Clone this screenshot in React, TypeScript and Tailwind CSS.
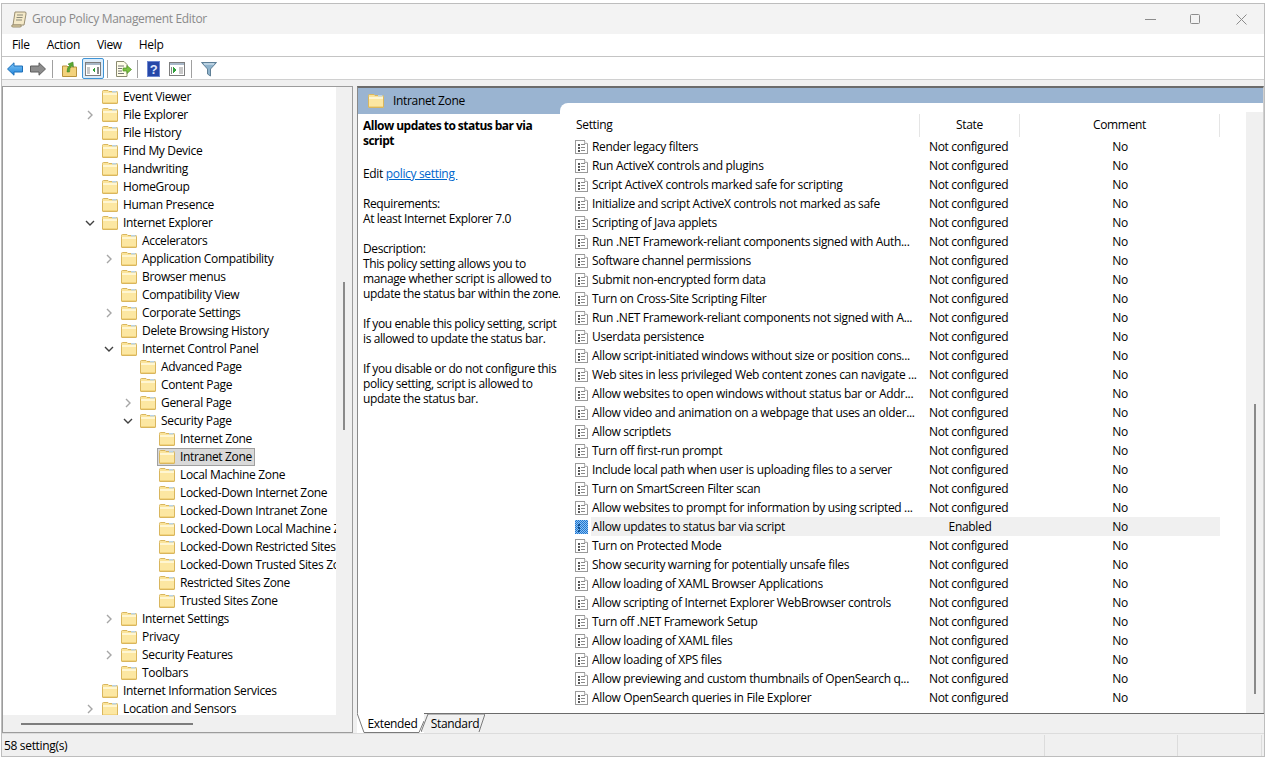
import React from "react";

const F = "font-['Open_Sans',sans-serif] text-[12px] tracking-[-0.33px]";

function Folder() {
  return (
    <svg width="16" height="14" viewBox="0 0 16 14" className="shrink-0">
      <path d="M0.5 2.5 V1.5 Q0.5 0.5 1.5 0.5 H6 L7 1.5 H15 Q15.5 1.5 15.5 2.5 V13 Q15.5 13.5 15 13.5 H1 Q0.5 13.5 0.5 13 Z" fill="#fbe49a" stroke="#d9b65e" />
      <path d="M1 3 H15 V5 H1 Z" fill="#fff6d2" />
      <path d="M1 5 H15 V13 H1 Z" fill="#fce7a2" />
      <path d="M10 1 H14.5 V2.5 H10 Z" fill="#b9d3e8" />
      <path d="M1 12 H15 V13 H1 Z" fill="#f3d57f" />
    </svg>
  );
}

const cells = Array.from({ length: 13 * 14 }, (_, i) => ({ x: i % 13, y: Math.floor(i / 13) }));

function PolicyIcon({ active = false }: { active?: boolean }) {
  if (active) {
    return (
      <svg width="14" height="14" viewBox="0 0 14 14" className="shrink-0" shapeRendering="crispEdges">
        {cells.map((c) => (
          <rect key={`${c.x}-${c.y}`} x={c.x} y={c.y} width="1" height="1" fill={(c.x + c.y) % 2 ? "#1f74cf" : "#8cc2f2"} />
        ))}
        <rect x="3" y="4" width="2" height="2" fill="#12508e" />
        <rect x="3" y="7" width="2" height="2" fill="#12508e" />
        <rect x="3" y="10" width="2" height="2" fill="#12508e" />
      </svg>
    );
  }
  return (
    <svg width="14" height="14" viewBox="0 0 14 14" className="shrink-0" shapeRendering="crispEdges">
      <path d="M0.5 0.5 H9.5 L12.5 3.5 V13.5 H0.5 Z" fill="#fff" stroke="#9a9a9a" />
      <path d="M9.5 0.5 V3.5 H12.5" fill="#e8e8e8" stroke="#b5b5b5" />
      <rect x="3" y="4" width="2" height="2" fill="#555" />
      <rect x="3" y="7" width="2" height="2" fill="#555" />
      <rect x="3" y="10" width="2" height="2" fill="#555" />
      <rect x="6" y="4" width="4" height="1" fill="#8a8a8a" />
      <rect x="6" y="7" width="4" height="1" fill="#8a8a8a" />
      <rect x="6" y="10" width="4" height="1" fill="#8a8a8a" />
    </svg>
  );
}

function Chevron({ open }: { open?: boolean }) {
  return (
    <svg width="10" height="10" viewBox="0 0 10 10" className="-ml-[2px] shrink-0">
      {open ? (
        <path d="M1 3 L5 7 L9 3" fill="none" stroke="#404040" strokeWidth="1.4" />
      ) : (
        <path d="M3 1 L7 5 L3 9" fill="none" stroke="#a6a6a6" strokeWidth="1.4" />
      )}
    </svg>
  );
}

type Node = [number, string, ("c" | "o")?, boolean?];
const tree: Node[] = [
  [0, "Event Viewer"],
  [0, "File Explorer", "c"],
  [0, "File History"],
  [0, "Find My Device"],
  [0, "Handwriting"],
  [0, "HomeGroup"],
  [0, "Human Presence"],
  [0, "Internet Explorer", "o"],
  [1, "Accelerators"],
  [1, "Application Compatibility", "c"],
  [1, "Browser menus"],
  [1, "Compatibility View"],
  [1, "Corporate Settings", "c"],
  [1, "Delete Browsing History"],
  [1, "Internet Control Panel", "o"],
  [2, "Advanced Page"],
  [2, "Content Page"],
  [2, "General Page", "c"],
  [2, "Security Page", "o"],
  [3, "Internet Zone"],
  [3, "Intranet Zone", undefined, true],
  [3, "Local Machine Zone"],
  [3, "Locked-Down Internet Zone"],
  [3, "Locked-Down Intranet Zone"],
  [3, "Locked-Down Local Machine Zone"],
  [3, "Locked-Down Restricted Sites Zone"],
  [3, "Locked-Down Trusted Sites Zone"],
  [3, "Restricted Sites Zone"],
  [3, "Trusted Sites Zone"],
  [1, "Internet Settings", "c"],
  [1, "Privacy"],
  [1, "Security Features", "c"],
  [1, "Toolbars"],
  [0, "Internet Information Services"],
  [0, "Location and Sensors", "c"],
];

const settings = [
  "Render legacy filters",
  "Run ActiveX controls and plugins",
  "Script ActiveX controls marked safe for scripting",
  "Initialize and script ActiveX controls not marked as safe",
  "Scripting of Java applets",
  "Run .NET Framework-reliant components signed with Auth...",
  "Software channel permissions",
  "Submit non-encrypted form data",
  "Turn on Cross-Site Scripting Filter",
  "Run .NET Framework-reliant components not signed with A...",
  "Userdata persistence",
  "Allow script-initiated windows without size or position cons...",
  "Web sites in less privileged Web content zones can navigate ...",
  "Allow websites to open windows without status bar or Addr...",
  "Allow video and animation on a webpage that uses an older...",
  "Allow scriptlets",
  "Turn off first-run prompt",
  "Include local path when user is uploading files to a server",
  "Turn on SmartScreen Filter scan",
  "Allow websites to prompt for information by using scripted ...",
  "Allow updates to status bar via script",
  "Turn on Protected Mode",
  "Show security warning for potentially unsafe files",
  "Allow loading of XAML Browser Applications",
  "Allow scripting of Internet Explorer WebBrowser controls",
  "Turn off .NET Framework Setup",
  "Allow loading of XAML files",
  "Allow loading of XPS files",
  "Allow previewing and custom thumbnails of OpenSearch q...",
  "Allow OpenSearch queries in File Explorer",
];

const indentClass = ["pl-[84px]", "pl-[103px]", "pl-[122px]", "pl-[141px]"];

function TreeRow({ n }: { n: Node }) {
  const [lvl, label, exp, sel] = n;
  return (
    <div className={`flex h-[18px] items-center whitespace-nowrap ${indentClass[lvl]}`}>
      <div className="flex w-[15px] shrink-0 justify-start">{exp ? <Chevron open={exp === "o"} /> : null}</div>
      {sel ? (
        <div className="-ml-[2px] flex h-[18px] items-center border border-[#a0a0a0] bg-[#d9d9d9] pl-[1px] pr-[2px]">
          <Folder />
          <span className="ml-[5px]">{label}</span>
        </div>
      ) : (
        <>
          <Folder />
          <span className="ml-[5px]">{label}</span>
        </>
      )}
    </div>
  );
}

function Sep({ ml }: { ml: string }) {
  return <div className={`${ml} h-[18px] w-px shrink-0 bg-[#a0a0a0]`} />;
}

function Toolbar() {
  return (
    <div className="flex h-[23px] shrink-0 items-center border-b border-[#d0d0d0] bg-white pl-[5px] pt-[2px]">
      <svg width="16" height="14" viewBox="0 0 16 14" className="shrink-0">
        <defs>
          <linearGradient id="blueArrow" x1="0" y1="0" x2="0" y2="1">
            <stop offset="0" stopColor="#7fc6f7" />
            <stop offset="1" stopColor="#1f83da" />
          </linearGradient>
        </defs>
        <path d="M0.5 7 L7 0.8 V4 H15.5 V10 H7 V13.2 Z" fill="url(#blueArrow)" stroke="#1d6fb8" />
      </svg>
      <svg width="16" height="14" viewBox="0 0 16 14" className="ml-[7px] shrink-0">
        <path d="M15.5 7 L9 0.8 V4 H0.5 V10 H9 V13.2 Z" fill="#8d8d8d" stroke="#5f5f5f" />
      </svg>
      <Sep ml="ml-[6px]" />
      <svg width="15" height="16" viewBox="0 0 15 16" className="ml-[9px] shrink-0">
        <path d="M0.5 5 H5 L6 6 H14.5 V15.5 H0.5 Z" fill="#f3d27c" stroke="#b8923c" />
        <path d="M5 11 Q5 6 7.5 4.5 L6 3 L11 1 L11.5 6 L9.5 5 Q7.5 7 7.5 11 Z" fill="#5aa832" stroke="#3f7f22" strokeWidth="0.5" />
      </svg>
      <div className="ml-[5px] -mt-[2px] flex h-[21px] w-[22px] shrink-0 items-center justify-center rounded-[2px] border border-[#3f94d6] bg-[#dcecfa] pt-[1px]">
        <svg width="16" height="14" viewBox="0 0 16 14" shapeRendering="crispEdges">
          <rect x="0.5" y="0.5" width="15" height="13" fill="#fff" stroke="#7d7d7d" />
          <rect x="1" y="1" width="14" height="2" fill="#a8b8c8" />
          <rect x="2" y="5" width="3" height="7" fill="#c8c8c8" />
          <path d="M10 5 V11 L7 8 Z" fill="#2fa03a" />
          <rect x="12" y="5" width="2" height="7" fill="#888" />
        </svg>
      </div>
      <Sep ml="ml-[3px]" />
      <svg width="17" height="16" viewBox="0 0 17 16" className="ml-[7px] shrink-0">
        <path d="M1.5 0.5 H9 L12 3.5 V15.5 H1.5 Z" fill="#fffde8" stroke="#8a8a70" />
        <path d="M3 5 H9 M3 7.5 H7 M3 10 H7 M3 12.5 H9" stroke="#777" />
        <path d="M8 7 H12 V4.5 L16.5 8.5 L12 12.5 V10 H8 Z" fill="#7cc242" stroke="#4f8f22" strokeWidth="0.7" />
      </svg>
      <Sep ml="ml-[5px]" />
      <svg width="13" height="16" viewBox="0 0 13 16" className="ml-[9px] shrink-0">
        <rect width="13" height="16" fill="#2647a8" />
        <rect x="0.5" y="0.5" width="12" height="15" fill="none" stroke="#6c86d0" />
        <text x="6.5" y="13" textAnchor="middle" fontSize="13" fontWeight="700" fill="#dfe6fb" fontFamily="Liberation Sans">?</text>
      </svg>
      <svg width="16" height="14" viewBox="0 0 16 14" shapeRendering="crispEdges" className="ml-[9px] shrink-0">
        <rect x="0.5" y="0.5" width="15" height="13" fill="#fff" stroke="#7d7d7d" />
        <rect x="1" y="1" width="14" height="2" fill="#a8b8c8" />
        <path d="M4 5 V11 L7 8 Z" fill="#2fa03a" />
        <rect x="2" y="5" width="1" height="7" fill="#888" />
        <rect x="10" y="5" width="4" height="7" fill="#c8c8c8" />
      </svg>
      <Sep ml="ml-[6px]" />
      <svg width="16" height="16" viewBox="0 0 16 16" className="ml-[9px] shrink-0">
        <path d="M0.5 1.5 H15.5 L9.5 8 V15 L6.5 13 V8 Z" fill="#8fb3cc" stroke="#5f7f96" />
        <path d="M3 3 H13" stroke="#e4eef5" />
      </svg>
    </div>
  );
}

export default function App() {
  return (
    <div className={`h-[759px] w-[1266px] overflow-hidden bg-white pl-px pr-px pt-[3px] text-black ${F}`}>
      <div className="flex h-[754px] flex-col border border-[#bdbdbd] bg-[#f0f0f0]">
        {/* Title bar */}
        <div className="flex h-[30px] shrink-0 items-center bg-[#f3f3f3] pl-[9px]">
          <svg width="16" height="17" viewBox="0 0 16 17" className="shrink-0">
            <path d="M4 1 H14 Q15.5 1 15 3 L13 14 H2 Z" fill="#f4e9c8" stroke="#9a8f72" />
            <path d="M1 14 H10 Q11 16 9 16 H2 Q0 16 1 14 Z" fill="#e6d6a8" stroke="#9a8f72" />
            <path d="M6 4 H12 M5.5 6.5 H11.5 M5 9 H11" stroke="#8a8a7a" />
          </svg>
          <span className="ml-[5px] text-[#8a8a8a]">Group Policy Management Editor</span>
          <div className="ml-auto flex items-center pr-[17px]">
            <svg width="11" height="11" viewBox="0 0 11 11" className="mr-[34px]"><path d="M0 5.5 H11" stroke="#8c8c8c" /></svg>
            <svg width="10" height="10" viewBox="0 0 10 10" className="mr-[36px]"><rect x="0.5" y="0.5" width="9" height="9" rx="1" fill="none" stroke="#8c8c8c" /></svg>
            <svg width="11" height="11" viewBox="0 0 11 11"><path d="M0.5 0.5 L10.5 10.5 M10.5 0.5 L0.5 10.5" stroke="#8c8c8c" /></svg>
          </div>
        </div>
        {/* Menu */}
        <div className="flex h-[23px] shrink-0 items-center gap-[17px] border-b border-[#c4c4c4] bg-white pl-[10px]">
          <span>File</span>
          <span>Action</span>
          <span>View</span>
          <span>Help</span>
        </div>
        <Toolbar />
        <div className="h-[6px] shrink-0 bg-[#f0f0f0]" />
        {/* Panes */}
        <div className="flex min-h-0 flex-1">
          {/* Tree pane */}
          <div className="flex h-[647px] w-[351px] shrink-0 flex-col border border-[#9c9c9c] bg-[#f0f0f0]">
            <div className="flex min-h-0 flex-1">
              <div className="h-[628px] w-[333px] overflow-hidden bg-white pt-px">
                {tree.map((n) => (
                  <TreeRow key={n[1]} n={n} />
                ))}
              </div>
              <div className="flex flex-1 justify-center pt-[195px]">
                <div className="h-[148px] w-[2px] bg-[#8a8a8a]" />
              </div>
            </div>
            <div className="flex h-[17px] shrink-0 items-center pl-[18px]">
              <div className="h-[2px] w-[172px] bg-[#7d7d7d]" />
            </div>
          </div>
          {/* Right pane */}
          <div className="ml-[4px] flex h-[647px] min-w-0 flex-1 flex-col bg-[#f0f0f0]">
            <div className="flex h-[628px] shrink-0 flex-col border-l border-r border-t-2 border-l-[#8a8a8a] border-r-[#d0d0d0] border-t-[#6b6b6b] bg-white">
              <div className="flex h-[26px] shrink-0 items-center bg-[#9ab4d1] pl-[10px]">
                <Folder />
                <span className="ml-[9px]">Intranet Zone</span>
              </div>
              <div className="flex min-h-0 flex-1">
                {/* Description */}
                <div className="w-[202px] shrink-0 whitespace-nowrap pl-[5px] pt-[4px] leading-[15px] tracking-[-0.39px]">
                  <div className="font-bold tracking-[-0.53px]">Allow updates to status bar via<br />script</div>
                  <div className="mt-[18px] tracking-[-0.33px]">
                    Edit <span className="whitespace-pre text-[#0066cc] underline">policy setting </span>
                  </div>
                  <div className="mt-[15px]">Requirements:<br />At least Internet Explorer 7.0</div>
                  <div className="mt-[15px]">
                    Description:<br />This policy setting allows you to<br />manage whether script is allowed to<br />update the status bar within the zone.
                  </div>
                  <div className="mt-[15px]">
                    If you enable this policy setting, script<br />is allowed to update the status bar.
                  </div>
                  <div className="mt-[15px]">
                    If you disable or do not configure this<br />policy setting, script is allowed to<br />update the status bar.
                  </div>
                </div>
                {/* List */}
                <div className="relative -mt-[11px] flex min-w-0 flex-1 rounded-tl-[8px] bg-white pl-[6px]">
                  <div className="w-[654px] shrink-0 pt-[11px]">
                    <div className="flex h-[23px] items-center">
                      <div className="h-[23px] w-[354px] border-r border-[#e5e5e5] pl-[10px] leading-[21px]">Setting</div>
                      <div className="h-[23px] w-[100px] border-r border-[#e5e5e5] text-center leading-[21px]">State</div>
                      <div className="h-[23px] w-[200px] border-r border-[#e5e5e5] text-center leading-[21px]">Comment</div>
                    </div>
                    {settings.map((s) => {
                      const on = s === "Allow updates to status bar via script";
                      return (
                        <div key={s} className="flex h-[19px] items-center">
                          <div className="flex w-[25px] shrink-0 justify-start pl-[9px]">
                            <PolicyIcon active={on} />
                          </div>
                          <div className={`flex h-[19px] flex-1 items-center ${on ? "bg-[#f0f0f0]" : ""}`}>
                            <div className="w-[329px] shrink-0 whitespace-nowrap pl-[1px]">{s}</div>
                            <div className={`w-[100px] shrink-0 ${on ? "text-center" : "pl-[9px]"}`}>{on ? "Enabled" : "Not configured"}</div>
                            <div className="w-[200px] shrink-0 text-center">No</div>
                          </div>
                        </div>
                      );
                    })}
                  </div>
                  <div className="ml-[26px] mt-[9px] flex flex-1 justify-center bg-[#f0f0f0] pt-[292px]">
                    <div className="h-[290px] w-[2px] bg-[#8a8a8a]" />
                  </div>
                </div>
              </div>
            </div>
            {/* Tabs */}
            <div className="relative -mt-px flex h-[19px] shrink-0 border-t border-[#6b6b6b]">
              <div className="relative -mt-px flex h-[20px] w-[67px] items-center justify-center bg-white pl-[4px] pt-[2px]">
                <svg width="67" height="20" viewBox="0 0 67 20" className="absolute left-0 top-0">
                  <path d="M0 0 L7 19.5 H62 L67 8" fill="none" stroke="#7a7a7a" />
                </svg>
                <span className="relative">Extended</span>
              </div>
              <div className="relative -ml-[3px] -mt-[1px] flex h-[20px] w-[64px] items-center justify-center pl-[4px] pt-[2px]">
                <svg width="64" height="20" viewBox="0 0 64 20" className="absolute left-0 top-0">
                  <path d="M0 19 L7 1 H64 L58 19" fill="#f0f0f0" stroke="#7a7a7a" />
                </svg>
                <span className="relative">Standard</span>
              </div>
            </div>
          </div>
        </div>
        {/* Status bar */}
        <div className="flex h-[23px] shrink-0 items-center border-t border-[#dcdcdc] bg-[#f0f0f0] pl-[2px]">
          <span className="w-[1040px] shrink-0 pt-px">58 setting(s)</span>
          <div className="h-[21px] w-[133px] shrink-0 border-l border-[#dcdcdc]" />
          <div className="h-[21px] w-[85px] shrink-0 border-l border-r border-[#dcdcdc]" />
        </div>
      </div>
    </div>
  );
}
